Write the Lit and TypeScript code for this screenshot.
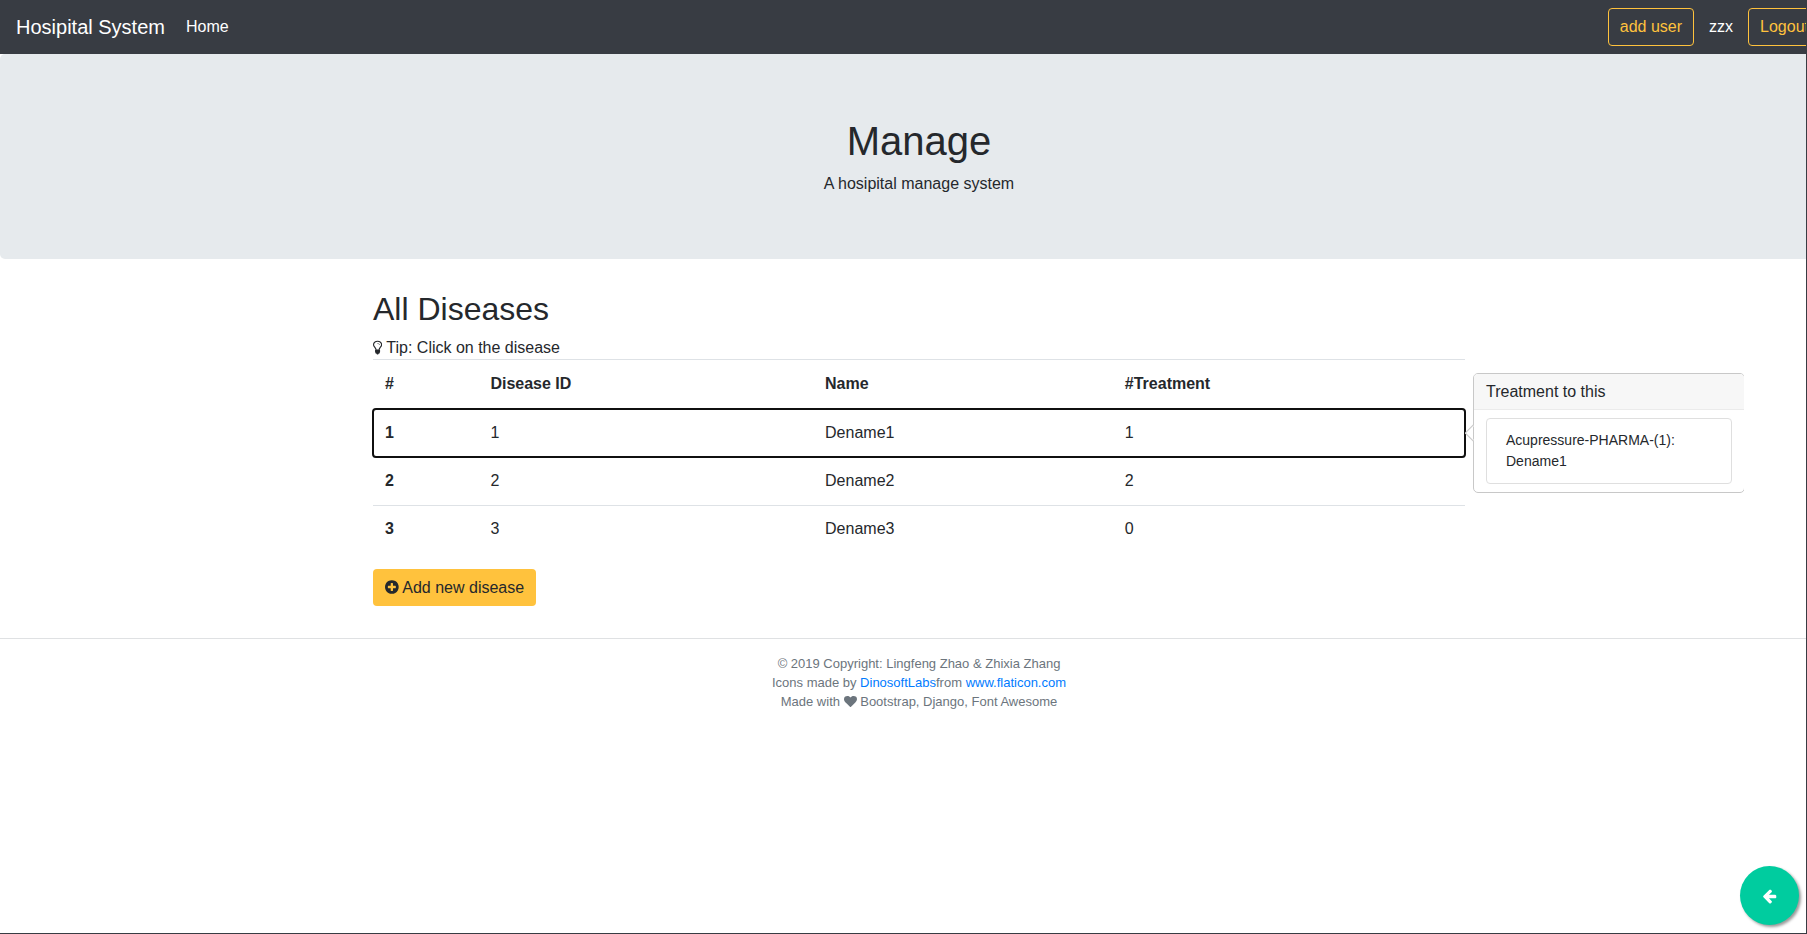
import { LitElement, html, css, svg } from "lit";
import { customElement, state } from "lit/decorators.js";

interface Disease {
  id: number;
  name: string;
  treatments: string[];
  count: number;
}

const DISEASES: Disease[] = [
  { id: 1, name: "Dename1", treatments: ["Acupressure-PHARMA-(1): Dename1"], count: 1 },
  { id: 2, name: "Dename2", treatments: [], count: 2 },
  { id: 3, name: "Dename3", treatments: [], count: 0 },
];

const bulb = svg`<path d="M1120 640q0 13-9.500 22.500t-22.500 9.500-22.500-9.500-9.500-22.500q0-46-54-71t-106-25q-13 0-22.500-9.500t-9.500-22.500 9.500-22.500 22.500-9.500q50 0 99.500 16t87 54 37.500 90zm160 0q0-72-34.500-134t-90-101.500-123-62-136.500-22.500-136.500 22.500-123 62-90 101.500-34.500 134q0 101 68 180 10 11 30.500 33t30.500 33q128 153 141 298h228q13-145 141-298 10-11 30.500-33t30.500-33q68-79 68-180zm128 0q0 155-103 268-45 49-74.500 87t-59.500 95.500-34 107.500q47 28 47 82 0 37-25 64 25 27 25 64 0 52-45 81 13 23 13 47 0 46-31.500 71t-77.500 25q-20 44-60 70t-87 26-87-26-60-70q-46 0-77.500-25t-31.500-71q0-24 13-47-45-29-45-81 0-37 25-64-25-27-25-64 0-54 47-82-4-50-34-107.500t-59.500-95.500-74.500-87q-103-113-103-268 0-99 44.500-184.500t117-142 164-89 186.500-32.500 186.500 32.500 164 89 117 142 44.500 184.500z"/>`;
const plus = svg`<path d="M1344 960v-128q0-26-19-45t-45-19h-256v-256q0-26-19-45t-45-19h-128q-26 0-45 19t-19 45v256h-256q-26 0-45 19t-19 45v128q0 26 19 45t45 19h256v256q0 26 19 45t45 19h128q26 0 45-19t19-45v-256h256q26 0 45-19t19-45zm320-64q0 209-103 385.500t-279.500 279.500-385.500 103-385.500-103-279.500-279.500-103-385.500 103-385.500 279.500-279.500 385.500-103 385.500 103 279.500 279.500 103 385.500z"/>`;
const heart = svg`<path d="M896 1664q-26 0-44-18l-624-602q-10-8-27.500-26t-55.500-65.500-68-97.500-53.500-121-23.500-138q0-220 127-344t351-124q62 0 126.500 21.500t120 58 95.500 68.500 76 68q36-36 76-68t95.500-68.500 120-58 126.500-21.500q224 0 351 124t127 344q0 221-229 450l-623 600q-18 18-44 18z"/>`;
const arrowLeft = svg`<path d="M1664 896v128q0 53-32.500 90.500t-84.500 37.500h-704l293 294q38 36 38 90t-38 90l-75 76q-37 37-90 37-52 0-91-37l-651-652q-37-37-37-90 0-52 37-91l651-650q38-38 91-38 52 0 90 38l75 74q38 38 38 91t-38 91l-293 293h704q52 0 84.500 37.500t32.500 90.500z"/>`;

@customElement("app-root")
export class AppRoot extends LitElement {
  @state() private selected = 1;

  static styles = css`
    :host {
      display: block;
      position: relative;
      box-sizing: border-box;
      min-height: 100vh;
      overflow: hidden;
      border-right: 1px solid #383c43;
      border-bottom: 1px solid #383c43;
      background: #fff;
      color: #25282c;
      font: 16px/24px "Liberation Sans", Arial, sans-serif;
    }
    *, *::before, *::after { box-sizing: border-box; }
    h1, h2, h3, p { margin: 0; font-weight: 400; }
    a { color: #007bff; text-decoration: none; }
    button { font: inherit; cursor: pointer; }

    .page { width: calc(100% + 32px); }

    .navbar {
      display: flex;
      align-items: center;
      padding: 8px 17px 8px 16px;
      background: #383c43;
    }
    .navbar a { color: #fff; }
    .navbar .brand { font-size: 20px; margin-right: 21px; }
    .account { display: flex; align-items: center; gap: 15px; margin-left: auto; }
    .outline {
      height: 38px;
      padding: 0 11px;
      border: 1px solid #ffc23d;
      border-radius: 4px;
      background: transparent;
      color: #ffc23d;
    }

    .hero {
      padding: 63px 32px;
      border-radius: 5px;
      background: #e6eaed;
      text-align: center;
    }
    .hero h1 { font-size: 40px; line-height: 48px; margin-bottom: 7px; }

    .container { max-width: 1140px; margin: 0 auto; padding: 31px 24px 32px; }
    h2 { font-size: 32px; line-height: 38px; margin-bottom: 8px; }
    .tip { line-height: 23px; }

    .icon { height: 16px; fill: currentColor; vertical-align: -2px; }
    .small-icon { height: 13px; fill: currentColor; vertical-align: -2px; }

    table {
      width: 100%;
      margin-bottom: 16px;
      border-spacing: 0;
      table-layout: fixed;
      text-align: left;
    }
    th, td { padding: 11px 12px 12px; border-top: 1px solid #dee2e6; }
    thead th { padding: 12px 12px 13px; }
    .c-index { width: 9.65%; }
    .c-id { width: 30.65%; }
    .c-name { width: 27.45%; }
    tbody tr { position: relative; cursor: pointer; }
    tbody tr.selected {
      z-index: 1;
      outline: 2px solid #101010;
      outline-offset: -1px;
      border-radius: 3px;
    }

    .popover {
      position: absolute;
      left: 100%;
      top: 50%;
      transform: translateY(-50%);
      width: 272px;
      margin-left: 8px;
      border: 1px solid #c8c8c8;
      border-radius: 5px;
      background: #fff;
      clip-path: inset(0 1px 0 -8px);
      font-size: 14px;
      line-height: 21px;
      cursor: auto;
    }
    .popover::before {
      content: "";
      position: absolute;
      left: -7px;
      top: 50%;
      width: 12px;
      height: 12px;
      margin-top: -6px;
      border: 1px solid #c8c8c8;
      border-top-color: transparent;
      border-right-color: transparent;
      background: linear-gradient(45deg, #fff 50%, transparent 50%);
      transform: rotate(45deg);
    }
    .popover h3 {
      padding: 6px 12px;
      border-bottom: 1px solid #ebebeb;
      border-radius: 4px 4px 0 0;
      background: #f7f7f7;
      font-size: 16px;
      line-height: 23px;
    }
    .popover ul { margin: 0; padding: 8px 12px; list-style: none; }
    .popover li {
      padding: 11px 19px;
      border: 1px solid #dfdfdf;
      border-radius: 4px;
    }

    .add {
      height: 37px;
      padding: 0 12px;
      border: 0;
      border-radius: 4px;
      background: #ffc23d;
      color: inherit;
    }

    footer {
      padding: 15px 16px;
      border-top: 1px solid #dfe1e3;
      color: #6c757d;
      text-align: center;
      font-size: 13px;
      line-height: 19px;
    }

    .back {
      position: absolute;
      right: 7px;
      bottom: 8px;
      display: grid;
      place-items: center;
      width: 59px;
      height: 59px;
      padding: 0;
      border: 0;
      border-radius: 50%;
      background: #00cc9f;
      color: #fff;
      box-shadow: 2px 2px 3px #999;
    }
  `;

  private popover(d: Disease) {
    return html`<div class="popover" role="tooltip">
      <h3>Treatment to this</h3>
      <ul>${d.treatments.map((t) => html`<li>${t}</li>`)}</ul>
    </div>`;
  }

  render() {
    return html`
      <div class="page">
        <nav class="navbar">
          <a class="brand" href="#">Hosipital System</a>
          <a href="#">Home</a>
          <div class="account">
            <button class="outline">add user</button>
            <a href="#">zzx</a>
            <button class="outline">Logout</button>
          </div>
        </nav>
        <header class="hero">
          <h1>Manage</h1>
          <p>A hosipital manage system</p>
        </header>
        <main class="container">
          <h2>All Diseases</h2>
          <p class="tip"><svg class="icon" viewBox="384 0 1024 1792" aria-hidden="true">${bulb}</svg> Tip: Click on the disease</p>
          <table>
            <thead>
              <tr>
                <th class="c-index" scope="col">#</th>
                <th class="c-id" scope="col">Disease ID</th>
                <th class="c-name" scope="col">Name</th>
                <th scope="col">#Treatment</th>
              </tr>
            </thead>
            <tbody>
              ${DISEASES.map((d) => html`
                <tr
                  tabindex="0"
                  class=${d.id === this.selected ? "selected" : ""}
                  @click=${() => (this.selected = d.id)}
                >
                  <th scope="row">${d.id}</th>
                  <td>${d.id}</td>
                  <td>${d.name}</td>
                  <td>${d.count}${d.id === this.selected ? this.popover(d) : ""}</td>
                </tr>`)}
            </tbody>
          </table>
          <button class="add"><svg class="icon" viewBox="128 0 1536 1792" aria-hidden="true">${plus}</svg> Add new disease</button>
        </main>
        <footer>
          <p>© 2019 Copyright: Lingfeng Zhao &amp; Zhixia Zhang</p>
          <p>Icons made by <a href="#">DinosoftLabs</a>from <a href="#">www.flaticon.com</a></p>
          <p>Made with <svg class="small-icon" viewBox="0 0 1792 1792" aria-hidden="true">${heart}</svg> Bootstrap, Django, Font Awesome</p>
        </footer>
      </div>
      <button class="back" aria-label="Back"><svg class="icon" viewBox="64 0 1664 1792" aria-hidden="true">${arrowLeft}</svg></button>
    `;
  }
}
